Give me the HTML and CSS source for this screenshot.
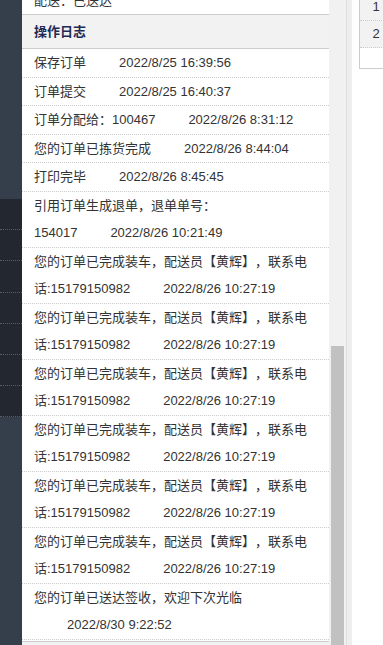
FILE: index.html
```html
<!DOCTYPE html>
<html lang="zh-CN">
  <head>
    <meta charset="UTF-8" />
    <meta name="viewport" content="width=device-width, initial-scale=1.0" />
    <title>操作日志</title>
    <link rel="stylesheet" href="styles.css">
  </head>

  <body>
    <div class="page">
      <aside class="side">
        <div class="side-top"></div>
        <ul class="side-menu">
          <li></li>
          <li></li>
          <li></li>
          <li></li>
          <li></li>
          <li></li>
          <li></li>
        </ul>
      </aside>

      <section class="panel">
        <div class="log">
          <div class="log-row first">配送：已送达</div>
          <div class="log-head">操作日志</div>
          <div class="log-row">保存订单<span class="time">2022/8/25 16:39:56</span></div>
          <div class="log-row">订单提交<span class="time">2022/8/25 16:40:37</span></div>
          <div class="log-row">订单分配给：100467<span class="time">2022/8/26 8:31:12</span></div>
          <div class="log-row">您的订单已拣货完成<span class="time">2022/8/26 8:44:04</span></div>
          <div class="log-row">打印完毕<span class="time">2022/8/26 8:45:45</span></div>
          <div class="log-row">引用订单生成退单，退单单号：<span class="keep">154017<span class="time">2022/8/26 10:21:49</span></span></div>
          <div class="log-row">您的订单已完成装车，配送员【黄辉】，联系电话:15179150982<span class="time">2022/8/26 10:27:19</span></div>
          <div class="log-row">您的订单已完成装车，配送员【黄辉】，联系电话:15179150982<span class="time">2022/8/26 10:27:19</span></div>
          <div class="log-row">您的订单已完成装车，配送员【黄辉】，联系电话:15179150982<span class="time">2022/8/26 10:27:19</span></div>
          <div class="log-row">您的订单已完成装车，配送员【黄辉】，联系电话:15179150982<span class="time">2022/8/26 10:27:19</span></div>
          <div class="log-row">您的订单已完成装车，配送员【黄辉】，联系电话:15179150982<span class="time">2022/8/26 10:27:19</span></div>
          <div class="log-row">您的订单已完成装车，配送员【黄辉】，联系电话:15179150982<span class="time">2022/8/26 10:27:19</span></div>
          <div class="log-row">您的订单已送达签收，欢迎下次光临<span class="time">2022/8/30 9:22:52</span></div>
          <div class="log-foot"></div>
        </div>
      </section>

      <div class="scrollbar"><div class="thumb"></div></div>
      <div class="split"></div>

      <div class="right">
        <div class="mini">
          <div class="mini-row">1</div>
          <div class="mini-row">2</div>
        </div>
      </div>
    </div>
  </body>
</html>
```

FILE: styles.css
```css
body {
  margin: 0;
  font-family: "Liberation Sans", "Noto Sans CJK SC", sans-serif;
  font-size: 13px;
  color: #333;
  overflow: hidden;
  text-spacing-trim: space-all;
}

.page {
  display: flex;
  height: 645px;
  overflow: hidden;
}

.side {
  width: 22px;
  flex: none;
  background-color: #353f4b;
}

.side-top {
  height: 199px;
}

.side-menu {
  list-style: none;
  margin: 0;
  padding: 0;
  background-color: #23272f;
}

.side-menu li {
  height: 30.2px;
  border-bottom: 1px dotted #585e66;
}

.panel {
  width: 307px;
  flex: none;
  background-color: #fff;
  overflow: hidden;
}

.log {
  margin-top: -13.5px;
}

.log-row {
  padding: 0 12px;
  line-height: 27.5px;
  border-bottom: 1px dotted #ccc;
}

.log-row.first {
  border-bottom: 1px solid #ccc;
}

.log-head {
  height: 33px;
  line-height: 33px;
  padding: 0 12px;
  background-color: #f2f2f2;
  border-bottom: 1px solid #ccc;
  font-weight: bold;
  color: #1f2b57;
}

.time {
  display: inline-block;
  margin-left: 33px;
}

.keep {
  white-space: nowrap;
}

.log-foot {
  height: 20px;
  margin-top: 1px;
  border-top: 1px solid #ccc;
  background-color: #f2f2f2;
}

.scrollbar {
  width: 17px;
  flex: none;
  display: flex;
  flex-direction: column;
  background-color: #f1f1f1;
}

.thumb {
  flex: 1;
  margin: 346px 2px 0;
  background-color: #c1c1c1;
}

.split {
  width: 5px;
  flex: none;
  background-color: #eee;
  border-left: 1px solid #ddd;
}

.right {
  flex: 1;
  background-color: #fff;
  overflow: hidden;
  padding-left: 7px;
}

.mini {
  width: 32px;
  margin-top: -6px;
  padding-bottom: 20px;
  border-left: 1px solid #ccc;
  border-bottom: 1px solid #ccc;
}

.mini-row {
  height: 26px;
  line-height: 26px;
  text-align: center;
  background-color: #f2f2f2;
  border-bottom: 1px dotted #ccc;
}
```
